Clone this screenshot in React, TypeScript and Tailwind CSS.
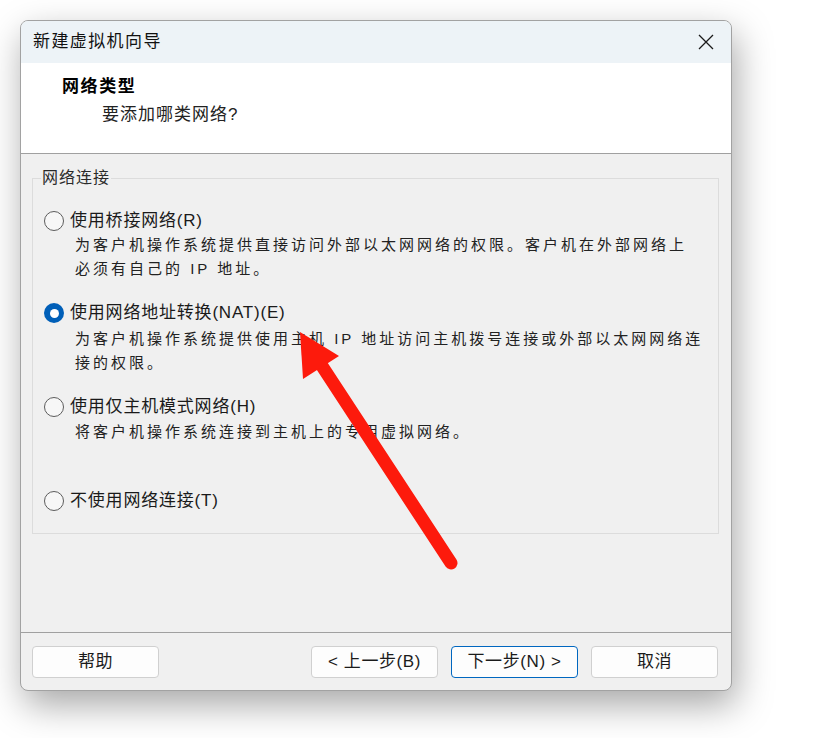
import type { ReactNode } from "react";

const CJK = "font-['Liberation_Sans','Noto_Sans_CJK_SC',sans-serif]";

function Radio({ checked }: { checked?: boolean }) {
	if (checked) {
		return (
			<span className="w-5 h-5 shrink-0 rounded-full bg-[#005fb8] flex items-center justify-center">
				<span className="w-[9px] h-[9px] rounded-full bg-white" />
			</span>
		);
	}
	return <span className="w-5 h-5 shrink-0 rounded-full border border-[#5c5c5c] bg-[#f7f7f7]" />;
}

function Option({
	label,
	checked,
	className = "",
	children,
}: {
	label: string;
	checked?: boolean;
	className?: string;
	children?: ReactNode;
}) {
	return (
		<div className={className}>
			<div className="flex items-center h-6">
				<Radio checked={checked} />
				<span className="ml-[6px] text-[17px] tracking-[0.8px] text-[#1a1a1a]">{label}</span>
			</div>
			{children && (
				<div className="pl-[31px] text-[15px] leading-6 tracking-[3px] text-[#222]">{children}</div>
			)}
		</div>
	);
}

function Button({ children, primary }: { children: ReactNode; primary?: boolean }) {
	return (
		<button
			type="button"
			className={`w-[127px] h-8 rounded-[4px] bg-[#fdfdfd] text-[17px] tracking-[0.6px] text-[#1b1b1b] flex items-center justify-center border ${
				primary ? "border-[#0067c0]" : "border-[#d0d0d0]"
			}`}
		>
			{children}
		</button>
	);
}

export default function App() {
	return (
		<div className={`relative w-[816px] h-[738px] bg-white overflow-hidden ${CJK}`}>
			<div className="absolute left-0 top-0 w-full h-full pt-5 pl-5">
				<div className="w-[712px] h-[671px] flex flex-col rounded-lg border border-[#a2a2a2] bg-[#f0f0f0] overflow-hidden shadow-[4px_14px_36px_rgba(0,0,0,0.35)]">
					{/* Title bar */}
					<div className="h-[42px] shrink-0 bg-[#edf3f7] flex items-center justify-between pl-3 pr-4">
						<span className="text-[17px] tracking-[1.4px] text-[#111]">新建虚拟机向导</span>
						<svg width="16" height="16" viewBox="0 0 16 16" className="mr-[1px]">
							<path d="M1 1 L15 15 M15 1 L1 15" stroke="#1a1a1a" strokeWidth="1.3" />
						</svg>
					</div>

					{/* Header */}
					<div className="h-[91px] shrink-0 bg-white pt-3 pl-[41px] border-b border-[#a0a0a0]">
						<div className="text-[17px] leading-6 font-bold tracking-[1.6px] text-black">网络类型</div>
						<div className="mt-1 pl-10 text-[17px] leading-6 tracking-[1px] text-[#222]">要添加哪类网络?</div>
					</div>

					{/* Body */}
					<div className="flex-1 pl-[11px] pr-[12px]">
						<fieldset className="mt-3 border border-[#dcdcdc] pl-[11px] pb-[20px]">
							<legend className="-ml-[3px] px-[1px] text-[16px] leading-6 tracking-[1px] text-[#2a2a2a]">网络连接</legend>
							<div className="pt-[19px]">
								<Option label="使用桥接网络(R)">
									<div>为客户机操作系统提供直接访问外部以太网网络的权限。客户机在外部网络上</div>
									<div>必须有自己的 IP 地址。</div>
								</Option>
								<Option label="使用网络地址转换(NAT)(E)" checked className="mt-5">
									<div className="mt-[2px]">为客户机操作系统提供使用主机 IP 地址访问主机拨号连接或外部以太网网络连</div>
									<div>接的权限。</div>
								</Option>
								<Option label="使用仅主机模式网络(H)" className="mt-[20px]">
									<div className="mt-[1px]">将客户机操作系统连接到主机上的专用虚拟网络。</div>
								</Option>
								<Option label="不使用网络连接(T)" className="mt-[45px]" />
							</div>
						</fieldset>
					</div>

					{/* Footer */}
					<div className="h-[58px] shrink-0 border-t border-[#a0a0a0] pt-[13px] pl-[11px] pr-[13px] flex items-start justify-between">
						<Button>帮助</Button>
						<div className="flex gap-[13px]">
							<Button>&lt; 上一步(B)</Button>
							<Button primary>下一步(N) &gt;</Button>
							<Button>取消</Button>
						</div>
					</div>
				</div>
			</div>

			{/* Red annotation arrow */}
			<svg className="absolute left-0 top-0 pointer-events-none" width="816" height="738" viewBox="0 0 816 738">
				<line x1="322" y1="366" x2="451" y2="563" stroke="#fd1a0c" strokeWidth="13" strokeLinecap="round" />
				<polygon points="300,332 339,356 303,379" fill="#fd1a0c" />
			</svg>
		</div>
	);
}
